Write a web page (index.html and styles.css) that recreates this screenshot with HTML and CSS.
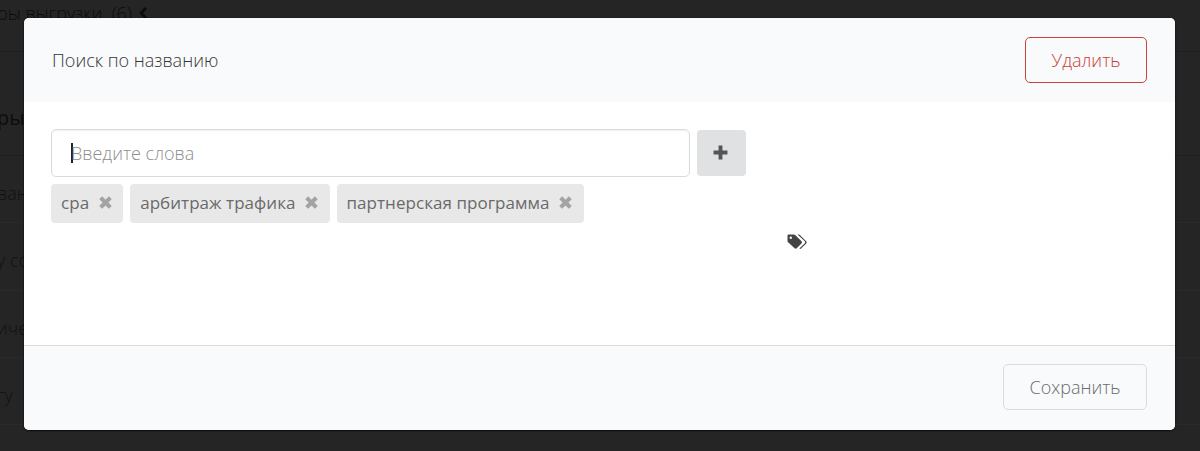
FILE: index.html
```html
<!DOCTYPE html>
<html lang="ru">
<head>
<meta charset="utf-8">
<title>Поиск по названию</title>
<link rel="stylesheet" href="styles.css">
</head>
<body>
<div class="page">
  <div class="page-top"><span class="page-top-text">ры выгрузки&nbsp; (6)</span><svg class="chev" viewBox="0 0 10 14" width="10" height="14"><path d="M8 2 3 7l5 5" fill="none" stroke="#0c0c0c" stroke-width="2.6"/></svg></div>
  <div class="page-title">ры</div>
  <div class="page-row">ван</div>
  <div class="page-row">у со</div>
  <div class="page-row">иче</div>
  <div class="page-row">гу</div>
</div>
<div class="modal">
  <header class="modal-head">
    <div class="modal-title">Поиск по названию</div>
    <button class="btn btn-danger" type="button">Удалить</button>
  </header>
  <main class="modal-body">
    <div class="input-row">
      <div class="input"><span class="caret"></span><span class="placeholder">Введите слова</span></div>
      <button class="add" type="button" aria-label="Добавить"><svg viewBox="0 0 14 14" width="15" height="15"><path d="M5.2 0.5h3.6v4.7h4.7v3.6H8.8v4.7H5.2V8.8H0.5V5.2h4.7z" fill="#555"/></svg></button>
    </div>
    <div class="tags">
      <span class="tag">сра<svg class="x" viewBox="0 0 12 12" width="15" height="15"><path d="M1 3.3 3.3 1 6 3.700 8.700 1 11 3.300 8.300 6 11 8.700 8.700 11 6 8.300 3.300 11 1 8.700 3.700 6z" fill="#a3a3a3"/></svg></span>
      <span class="tag">арбитраж трафика<svg class="x" viewBox="0 0 12 12" width="15" height="15"><path d="M1 3.3 3.3 1 6 3.700 8.700 1 11 3.300 8.300 6 11 8.700 8.700 11 6 8.300 3.300 11 1 8.700 3.700 6z" fill="#a3a3a3"/></svg></span>
      <span class="tag">партнерская программа<svg class="x" viewBox="0 0 12 12" width="15" height="15"><path d="M1 3.3 3.3 1 6 3.700 8.700 1 11 3.300 8.300 6 11 8.700 8.700 11 6 8.300 3.300 11 1 8.700 3.700 6z" fill="#a3a3a3"/></svg></span>
    </div>
    <svg class="tags-icon" viewBox="0 0 20 16" width="20" height="16"><path d="M0.500 1.800C0.500 1 1 .5 1.800.5H7c.5 0 .9.2 1.200.5l6.300 6.300c.6.6.6 1.500 0 2.100l-4.800 4.800c-.6.6-1.500.6-2.100 0L1.100 8.200C.7 7.900.5 7.500.5 7z" fill="#444"/><circle cx="3.800" cy="3.800" r="1.200" fill="#fff"/><path d="M10.500.5h1.200c.5 0 .9.2 1.200.5l6.300 6.300c.6.6.6 1.500 0 2.100l-5.100 5.100c-.5.5-1.200.5-1.700.1l5.400-5.400c.5-.6.500-1.400 0-1.900z" fill="#444"/></svg>
  </main>
  <footer class="modal-foot">
    <button class="btn btn-muted" type="button">Сохранить</button>
  </footer>
</div>
</body>
</html>
```
FILE: styles.css
```css
* { box-sizing: border-box; }
html, body { margin: 0; height: 100%; }
body {
  background: #252525;
  font-family: "Open Sans", "Noto Sans", sans-serif;
  overflow: hidden;
}
.page { height: 451px; overflow: hidden; color: #0e0e0e; margin-left: -3px; }
.page-top {
  height: 52px;
  border-bottom: 1px solid #1f1f1f;
  font-size: 18px;
  font-weight: 300;
  display: flex;
  align-items: flex-start;
  gap: 6px;
  padding-top: 1px;
  line-height: 24px;
}
.page-top-text { color: #0c0c0c; }
.chev { margin-top: 5px; }
.page-title {
  height: 104px;
  border-bottom: 1px solid #1f1f1f;
  font-size: 20px;
  line-height: 28px;
  padding-top: 52px;
  color: #0c0c0c;
}
.page-row {
  height: 67.33px;
  border-bottom: 1px solid #292929;
  font-size: 18px;
  font-weight: 300;
  line-height: 24px;
  padding-top: 25px;
  color: #111;
}
.modal {
  position: absolute;
  left: 24px;
  top: 18px;
  width: 1151px;
  height: 412px;
  background: #fff;
  border-radius: 5px;
  overflow: hidden;
  display: flex;
  flex-direction: column;
  box-shadow: 0 1px 2px rgba(0, 0, 0, .7), 0 0 1px rgba(0, 0, 0, .8);
}
.modal-head {
  height: 84px;
  background: #f9fafb;
  display: flex;
  align-items: center;
  justify-content: space-between;
  padding: 0 28px;
}
.modal-title { font-size: 18px; font-weight: 300; color: #363636; }
.btn {
  height: 46px;
  border-radius: 5px;
  background: transparent;
  font-family: inherit;
  font-size: 18px;
  font-weight: 300;
  padding: 0;
}
.btn-danger { width: 122px; border: 1px solid #d0403c; color: #c93a36; }
.btn-muted { width: 144px; border: 1px solid #dbdbdb; color: #6b6b6b; }
.modal-body { position: relative; flex: 1; padding: 27px 27px 0; }
.input-row { display: flex; align-items: center; gap: 7px; }
.input {
  width: 639px;
  height: 48px;
  border: 1px solid #dbdbdb;
  border-radius: 5px;
  display: flex;
  align-items: center;
  padding-left: 19px;
  box-shadow: inset 0 1px 2px rgba(10, 10, 10, .06);
  font-size: 18px;
  font-weight: 300;
}
.caret { width: 2px; height: 20px; background: #222; margin-right: -2px; }
.placeholder { color: #8e8e8e; }
.add {
  width: 49px;
  height: 46px;
  border: 0;
  border-radius: 4px;
  background: #e0e1e3;
  display: flex;
  align-items: center;
  justify-content: center;
  padding: 0 2px 1px 0;
}
.tags { display: flex; gap: 7px; margin-top: 7px; }
.tag {
  height: 39px;
  background: #e8e8e8;
  border-radius: 4px;
  display: flex;
  align-items: center;
  gap: 8.5px;
  padding: 0 10.5px 3px 10px;
  font-size: 17px;
  letter-spacing: .05px;
  color: #6a6a6a;
}
.x { margin-top: 1px; }
.tags-icon { position: absolute; left: 763px; top: 132px; }
.modal-foot {
  height: 85px;
  background: #f9fafb;
  border-top: 1px solid #dbdbdb;
  display: flex;
  align-items: center;
  justify-content: flex-end;
  padding: 0 28px 2px;
}
```
